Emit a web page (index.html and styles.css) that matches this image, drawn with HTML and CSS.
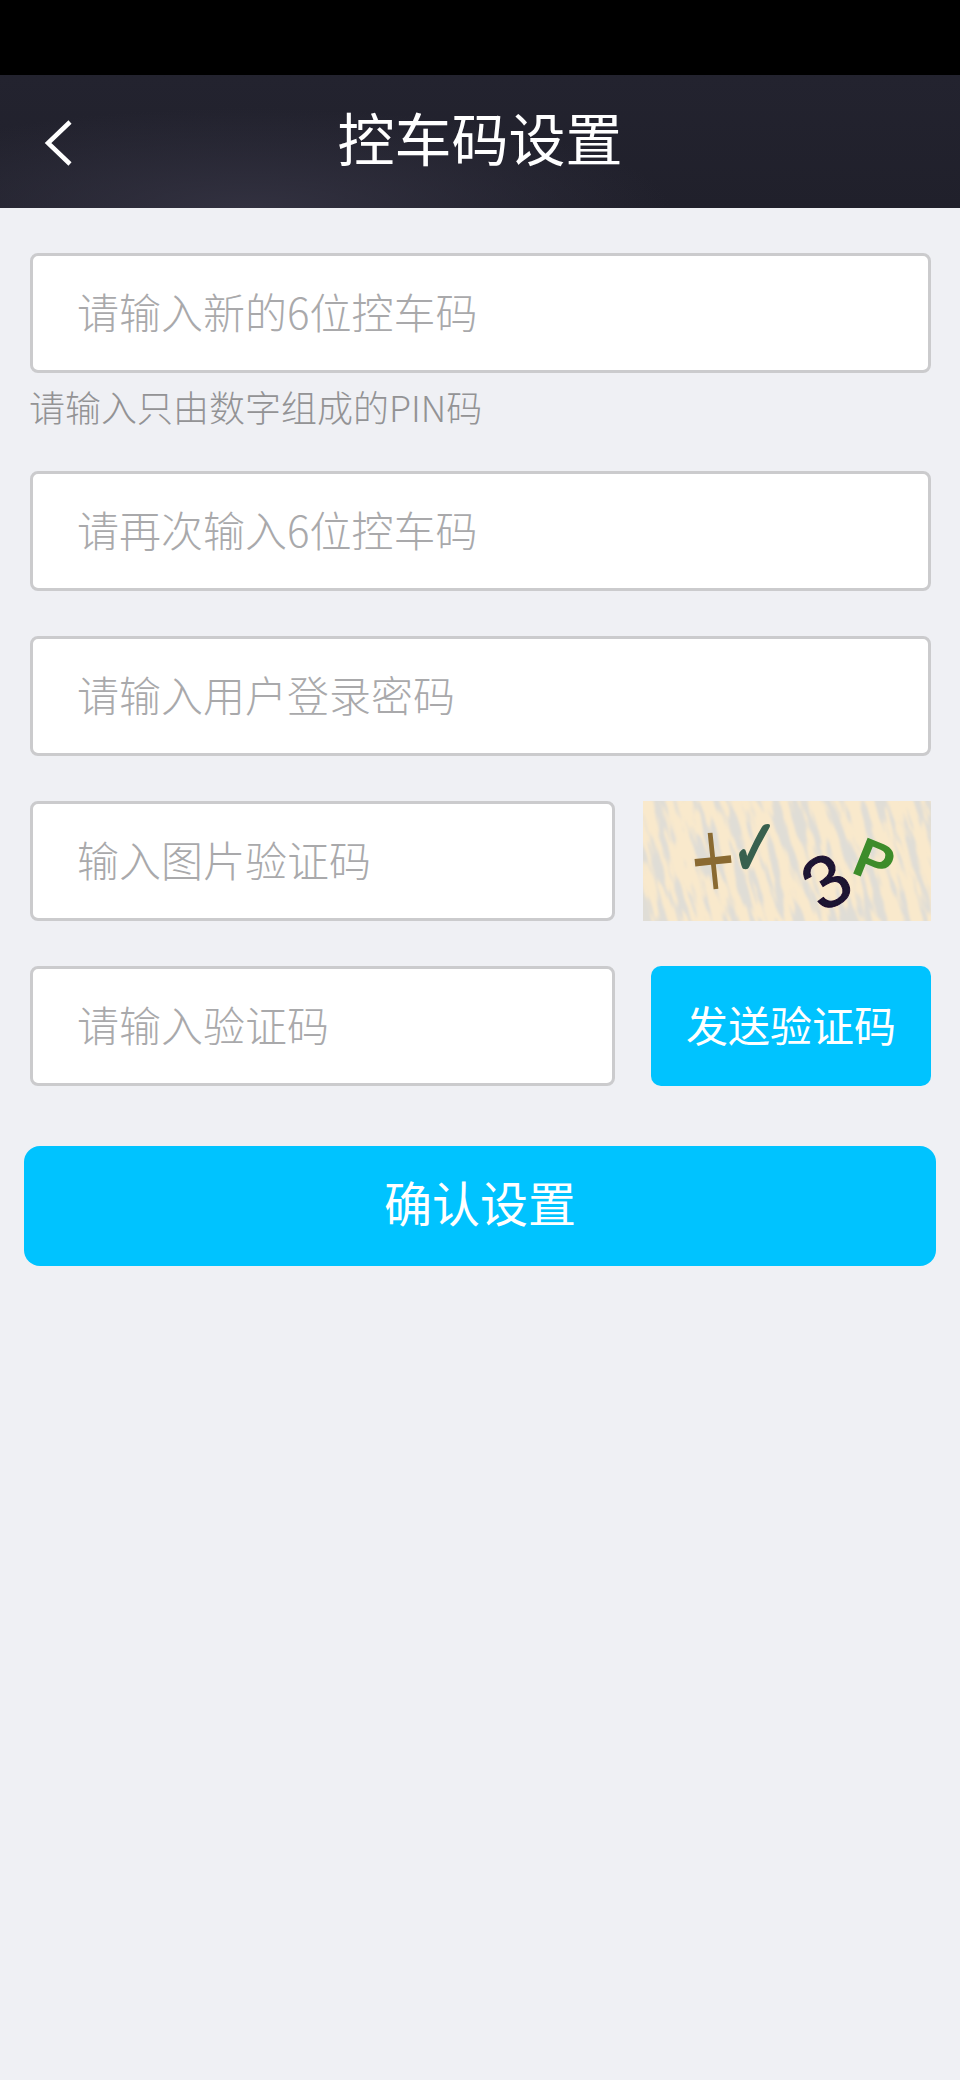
FILE: index.html
```html
<!DOCTYPE html>
<html lang="zh-CN">
<head>
    <meta charset="UTF-8">
    <meta name="viewport" content="width=device-width, initial-scale=1.0">
    <title>控车码设置</title>
    <link rel="stylesheet" href="styles.css">
</head>
<body>
    <div class="status-bar"></div>
    <header class="top-bar">
        <a class="back" href="#">
            <svg width="32" height="48" viewBox="0 0 32 48">
                <polyline points="27,3 5,24 27,45" fill="none" stroke="#fff" stroke-width="4.5"/>
            </svg>
        </a>
        <h1 class="page-title">控车码设置</h1>
    </header>
    <form class="form">
        <div class="group-pin">
            <input class="field" type="text" placeholder="请输入新的6位控车码">
            <p class="hint">请输入只由数字组成的PIN码</p>
        </div>
        <input class="field" type="text" placeholder="请再次输入6位控车码">
        <input class="field" type="text" placeholder="请输入用户登录密码">
        <div class="row">
            <input class="field short" type="text" placeholder="输入图片验证码">
            <svg class="captcha" width="288" height="120" viewBox="0 0 288 120">
                <defs>
                    <filter id="streaks" x="0" y="0" width="100%" height="100%">
                        <feTurbulence type="fractalNoise" baseFrequency="0.11 0.018" numOctaves="3" seed="7"/>
                        <feColorMatrix type="matrix" values="0 0 0 0 0.74  0 0 0 0 0.72  0 0 0 0 0.67  9 0 0 0 -4.4"/>
                        <feGaussianBlur stdDeviation="0.9"/>
                    </filter>
                    <filter id="soft"><feGaussianBlur stdDeviation="0.5"/></filter>
                </defs>
                <rect width="288" height="120" fill="#f9e9cc"/>
                <rect x="-40" y="-60" width="380" height="240" filter="url(#streaks)" transform="rotate(-16 144 60)"/>
                <g class="captcha-text" filter="url(#soft)">
                    <text x="0" y="0" font-size="60" fill="#8a6a30" text-anchor="middle" transform="translate(73 88) rotate(-6) scale(0.97 1.5)">+</text>
                    <text x="0" y="0" font-size="60" fill="#39614f" stroke="#39614f" stroke-width="1.5" text-anchor="middle" transform="translate(112 75) scale(0.95 1.35)">✓</text>
                    <text class="liberation" x="0" y="0" font-size="74" fill="#1e1230" stroke="#1e1230" stroke-width="1" text-anchor="middle" transform="translate(197 102) rotate(-32)">3</text>
                    <text class="liberation" x="0" y="0" font-size="56" font-weight="700" fill="#3c8c2c" text-anchor="middle" transform="translate(224 78) rotate(22)">P</text>
                </g>
            </svg>
        </div>
        <div class="row row-send">
            <input class="field short" type="text" placeholder="请输入验证码">
            <button class="btn send" type="button">发送验证码</button>
        </div>
        <button class="btn confirm" type="button">确认设置</button>
    </form>
</body>
</html>
```

FILE: styles.css
```css
* {
    box-sizing: border-box;
}
html, body {
    height: 100%;
}
body {
    margin: 0;
    background-color: #eff0f4;
    font-family: "Noto Sans CJK SC", "Noto Sans", sans-serif;
}
.status-bar {
    height: 75px;
    background-color: #000;
}
.top-bar {
    height: 133px;
    display: flex;
    align-items: center;
    position: relative;
    padding: 0 0 12px;
    background:
        radial-gradient(ellipse 420px 100px at 250px 133px, #323140 0%, rgba(50, 49, 64, 0) 100%),
        linear-gradient(#23232f, #20202b);
}
.back {
    position: absolute;
    left: 43px;
    top: 44px;
    display: block;
    line-height: 0;
}
.page-title {
    flex: 1;
    margin: 0;
    text-align: center;
    color: #fff;
    font-size: 57px;
    font-weight: 400;
    line-height: 80px;
}
.form {
    display: flex;
    flex-direction: column;
    gap: 45px;
    padding: 45px 29px 0 30px;
}
.field {
    display: block;
    width: 100%;
    height: 120px;
    padding: 0 44px 6px 44px;
    background-color: #fff;
    border: 3px solid #cbcbcd;
    border-radius: 8px;
    outline: none;
    font-family: inherit;
    font-size: 42px;
    font-weight: 300;
    color: #333;
}
.field::placeholder {
    color: #a9a9ab;
    opacity: 1;
}
.hint {
    margin: 7px 0 -6px -1px;
    color: #939395;
    font-size: 36px;
    font-weight: 300;
    line-height: 52px;
}
.row {
    display: flex;
    align-items: center;
    justify-content: space-between;
}
.field.short {
    width: 585px;
}
.captcha {
    display: block;
}
.captcha-text {
    font-family: "DejaVu Sans", sans-serif;
}
.captcha-text .liberation {
    font-family: "Liberation Sans", sans-serif;
}
.btn {
    border: none;
    background-color: #00c3ff;
    color: #fff;
    font-family: inherit;
    font-weight: 400;
}
.send {
    width: 280px;
    height: 120px;
    padding: 0 0 6px;
    border-radius: 10px;
    font-size: 42px;
}
.confirm {
    width: 912px;
    height: 120px;
    padding: 0 0 10px;
    margin: 15px 0 0 -6px;
    border-radius: 16px;
    font-size: 48px;
}
```
